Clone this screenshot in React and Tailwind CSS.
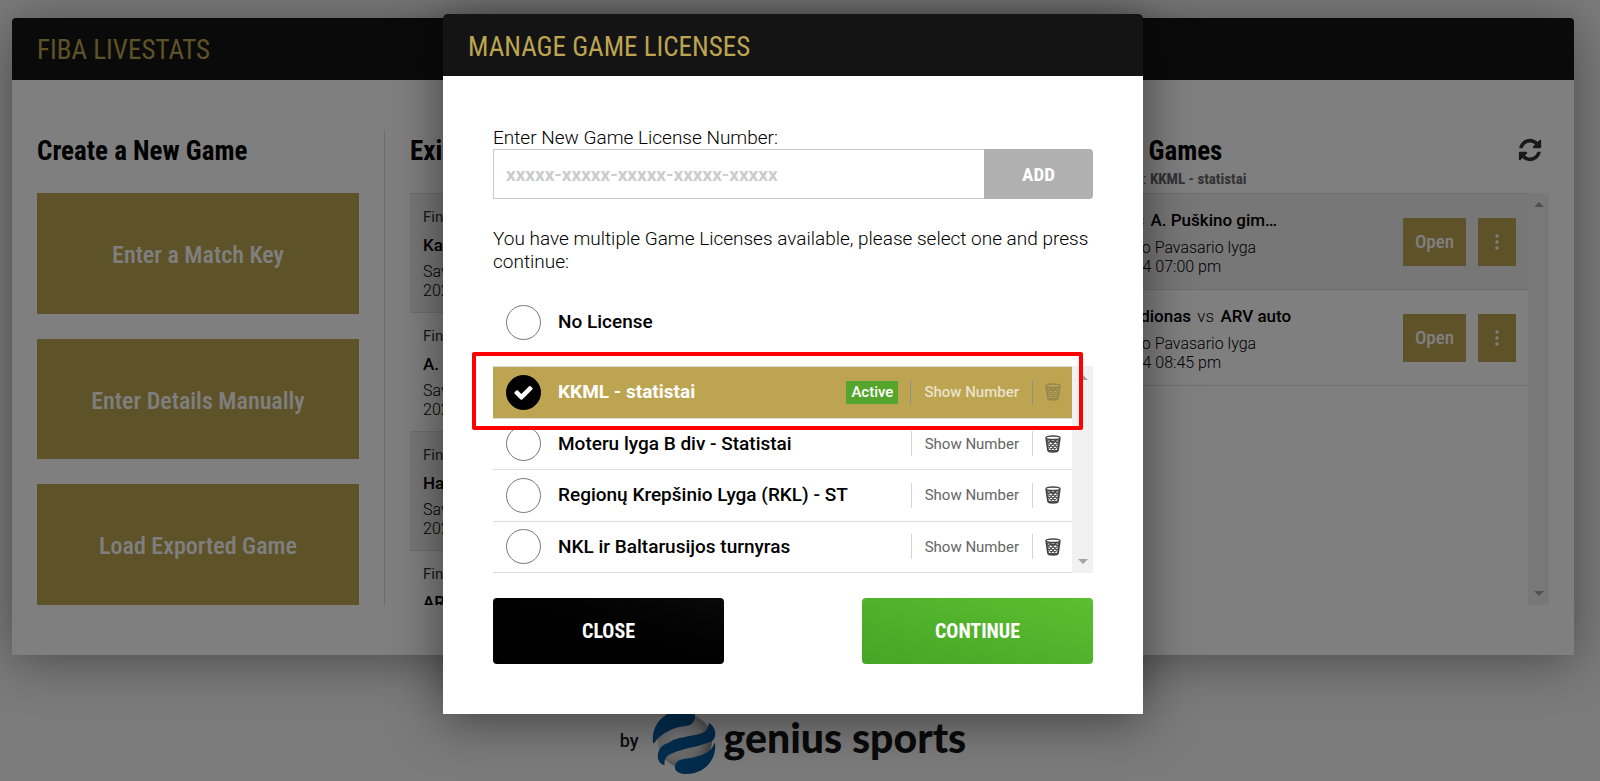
import { useState } from "react";

const licenses = [
  { id: "kkml", name: "KKML - statistai", active: true },
  { id: "moteru", name: "Moteru lyga B div - Statistai" },
  { id: "rkl", name: "Regionų Krepšinio Lyga (RKL) - ST" },
  { id: "nkl", name: "NKL ir Baltarusijos turnyras" },
];

const existingGames = [
  { status: "Final", name: "Kauno", saved: "Saved", date: "2024" },
  { status: "Final", name: "A. Puškino", saved: "Saved", date: "2024" },
  { status: "Final", name: "Handler", saved: "Saved", date: "2024" },
  { status: "Final", name: "ARV auto", saved: "Saved", date: "2024" },
];

const onlineGames = [
  { home: "KTU", away: "A. Puškino gim…", league: "Jaunimo Pavasario lyga", date: "2-5-2024 07:00 pm" },
  { home: "BC Stadionas", away: "ARV auto", league: "Jaunimo Pavasario lyga", date: "2-5-2024 08:45 pm" },
];

const CheckIcon = () => (
  <svg viewBox="0 0 1792 1792" className="pointer-events-none absolute inset-0 m-auto size-[21px] fill-white">
    <path d="M1671 566q0 40-28 68l-724 724-136 136q-28 28-68 28t-68-28l-136-136-362-362q-28-28-28-68t28-68l136-136q28-28 68-28t68 28l294 295 656-657q28-28 68-28t68 28l136 136q28 28 28 68z" />
  </svg>
);

const RefreshIcon = () => (
  <svg viewBox="0 0 1792 1792" className="size-[26px] fill-[#333]">
    <path d="M1639 1056q0 5-1 7-64 268-268 434.500t-478 166.500q-146 0-282.500-55t-243.500-157l-129 129q-19 19-45 19t-45-19-19-45v-448q0-26 19-45t45-19h448q26 0 45 19t19 45-19 45l-137 137q71 66 161 102t187 36q134 0 250-65t186-179q11-17 53-117 8-23 30-23h192q13 0 22.500 9.500t9.500 22.500zm25-800v448q0 26-19 45t-45 19h-448q-26 0-45-19t-19-45 19-45l138-138q-148-137-349-137-134 0-250 65t-186 179q-11 17-53 117-8 23-30 23h-199q-13 0-22.500-9.500t-9.500-22.500v-7q65-268 270-434.500t480-166.500q146 0 284 55.500t245 156.500l130-129q19-19 45-19t45 19 19 45z" />
  </svg>
);

const TrashIcon = () => (
  <svg viewBox="0 0 16 18" className="h-[18px] w-4" fill="none" stroke="#444">
    <ellipse cx="8" cy="2.800" rx="7" ry="1.800" strokeWidth="1.500" />
    <path d="M1.200 3.500 2.900 15.200Q3.200 17 8 17t5.100-1.800L14.800 3.500" strokeWidth="1.700" />
    <path d="M2 5.500Q8 7.500 14 5.500M3 15q5 1.800 10 0" strokeWidth="1.300" />
    <path d="M2 6.500 11.500 16M5 5.500l8 8M9.500 5.500l4.300 4.300M2.700 10.500 8.500 16.300M14 6.500 4.500 16M11 5.500l-8 8M6.500 5.500 2.200 9.800M13.300 10.500 7.500 16.300" strokeWidth="1.100" />
  </svg>
);

const GlobeLogo = () => (
  <svg viewBox="0 0 64 66" className="h-[66px] w-16">
    <defs>
      <radialGradient id="ball" cx="0.400" cy="0.450" r="0.650">
        <stop offset="0" stopColor="#f4f4f4" />
        <stop offset="0.600" stopColor="#cfcfcf" />
        <stop offset="1" stopColor="#7a7a7a" />
      </radialGradient>
      <linearGradient id="band" x1="0" y1="0" x2="1" y2="1">
        <stop offset="0" stopColor="#0a66ac" />
        <stop offset="1" stopColor="#004c8c" />
      </linearGradient>
    </defs>
    <circle cx="33" cy="32" r="27" fill="url(#ball)" />
    <path d="M1 34C-1 14 14 1 32 1c8 0 12 3 11 8-1 4-3 7-9 8-10 1-16 4-21 7C8 27 5 30 3 33q-1 2-2 1z" fill="url(#band)" />
    <path d="M57 14c5 3 7 8 6 13-1 4-3 6-8 7-8 3-15 4-22 6-11 3-19 6-20 11-1 2 0 5-1 5-4-1-7-5-6-11 1-6 4-9 10-11 6-4 11-5 17-6 8-2 14-2 19-5 4-2 4-6 5-9z" fill="url(#band)" />
    <path d="M63 34c2 16-10 31-29 31-8 0-12-4-11-8 1-5 4-6 9-7 7-1 12-2 18-4 7-3 10-6 12-11q1-2 1-1z" fill="url(#band)" />
  </svg>
);

const Scrollbar = () => (
  <div className="flex w-[21px] shrink-0 flex-col items-center justify-between bg-[#f1f1f1] py-[7px]">
    <svg viewBox="0 0 10 10" className="size-[10px] fill-[#a3a3a3]">
      <path d="M0 7 5 2l5 5z" />
    </svg>
    <svg viewBox="0 0 10 10" className="size-[10px] fill-[#a3a3a3]">
      <path d="M0 3h10L5 8z" />
    </svg>
  </div>
);

const LicenseRadio = ({ id, checked, onChange }) => (
  <span className="relative block size-[35px] shrink-0">
    <input
      type="radio"
      name="license"
      id={id}
      checked={checked}
      onChange={onChange}
      className="block size-full appearance-none rounded-full border border-[#777] bg-white checked:border-black checked:bg-black"
    />
    {checked && <CheckIcon />}
  </span>
);

const LicenseRow = ({ license, selected, onSelect }) => (
  <li
    className={`flex flex-1 items-center gap-3 border-b border-[#dcdcdc] pr-[11px] pl-[13px] ${
      selected ? "bg-[#bda451]" : "bg-white"
    }`}
  >
    <LicenseRadio id={license.id} checked={selected} onChange={onSelect} />
    <label
      htmlFor={license.id}
      className={`flex-1 pl-[5px] text-[19px] ${selected ? "font-bold text-white" : "font-medium text-black"}`}
    >
      {license.name}
    </label>
    {license.active && (
      <span className="bg-[#54a52c] px-[5px] text-[15px] leading-[23px] font-medium text-white">Active</span>
    )}
    <button
      type="button"
      className={`h-[25px] border-x px-[13px] text-[15px] ${
        selected ? "border-[#8f8f8f] font-medium text-white/70" : "border-[#d5d5d5] text-[#666]"
      }`}
    >
      Show Number
    </button>
    <button type="button" aria-label="Delete license" className={selected ? "opacity-30" : ""}>
      <TrashIcon />
    </button>
  </li>
);

const ManageLicenses = () => {
  const [selected, setSelected] = useState("kkml");
  const [number, setNumber] = useState("");

  return (
    <div role="dialog" aria-label="Manage Game Licenses" className="relative w-full max-w-[700px] self-start rounded-t bg-white shadow-[0_5px_50px_rgba(0,0,0,0.5)]">
      <header className="flex h-[62px] items-center rounded-t bg-[#141414] px-[25px] pt-1">
        <h2 className="font-['Roboto_Condensed','Liberation_Sans_Narrow',sans-serif] text-[27px] text-[#bda451] uppercase">
          Manage Game Licenses
        </h2>
      </header>

      <div className="p-[50px]">
        <label htmlFor="license-number" className="block text-[19px] leading-[23px] font-light">
          Enter New Game License Number:
        </label>
        <div className="flex h-[50px]">
          <input
            id="license-number"
            type="text"
            value={number}
            onChange={(e) => setNumber(e.target.value)}
            placeholder="xxxxx-xxxxx-xxxxx-xxxxx-xxxxx"
            className="min-w-0 flex-1 border border-r-0 border-[#c8c8c8] px-3 pt-[2px] text-[19px] font-bold placeholder:text-[#ccc]"
          />
          <button
            type="button"
            className="w-[109px] rounded-r bg-[#b0b0b0] pt-[2px] font-['Roboto_Condensed','Liberation_Sans_Narrow',sans-serif] text-[19px] font-bold text-white"
          >
            ADD
          </button>
        </div>

        <p className="mt-7 text-[19px] leading-[23px] font-light">
          You have multiple Game Licenses available, please select one and press continue:
        </p>

        <div className="mt-8 flex items-center gap-[17px] px-[13px]">
          <LicenseRadio id="none" checked={selected === "none"} onChange={() => setSelected("none")} />
          <label htmlFor="none" className="text-[19px] font-medium">
            No License
          </label>
        </div>

        <div className="relative mt-[26px] flex h-[207px]">
          <ul className="flex flex-1 flex-col border-t border-[#dcdcdc]">
            {licenses.map((license) => (
              <LicenseRow
                key={license.id}
                license={license}
                selected={selected === license.id}
                onSelect={() => setSelected(license.id)}
              />
            ))}
          </ul>
          <Scrollbar />
          <div className="pointer-events-none absolute -top-[14px] -left-[21px] h-[78px] w-[611px] rounded-xs border-4 border-[#fe0000]" />
        </div>

        <div className="mt-[25px] flex justify-between font-['Roboto_Condensed','Liberation_Sans_Narrow',sans-serif] text-[20px] font-bold text-white">
          <button type="button" className="h-[66px] w-[231px] rounded bg-linear-to-tr from-black to-[#0a0a0a]">
            CLOSE
          </button>
          <button type="button" className="h-[66px] w-[231px] rounded bg-linear-to-tr from-[#46a526] to-[#5bbf30]">
            CONTINUE
          </button>
        </div>
      </div>
    </div>
  );
};

const App = () => {
  return (
    <div className="relative min-h-screen overflow-hidden bg-[#f6f6f6] pt-[18px] pr-[26px] pl-3 font-[Roboto,sans-serif] text-black">
      <main className="rounded-t bg-white shadow-[0_5px_50px_rgba(0,0,0,0.4)]">
        <header className="flex h-[62px] items-center rounded-t bg-[#141414] px-[25px] pt-[3px]">
          <h1 className="font-['Roboto_Condensed','Liberation_Sans_Narrow',sans-serif] text-[27px] text-[#bda451]">
            FIBA LIVESTATS
          </h1>
        </header>

        <div className="flex h-[calc(100vh-206px)] gap-[25px] px-[25px] py-[50px]">
          <section className="flex w-[348px] shrink-0 flex-col border-r border-[#dcdcdc] pr-[25px] font-['Roboto_Condensed','Liberation_Sans_Narrow',sans-serif]">
            <h2 className="h-[63px] shrink-0 text-[27px] leading-[42px] font-bold">Create a New Game</h2>
            <div className="flex flex-1 flex-col gap-[25px] text-[24px] font-medium text-white">
              <button type="button" className="flex-1 bg-[#bda451] pt-[3px]">Enter a Match Key</button>
              <button type="button" className="flex-1 bg-[#bda451] pt-[3px]">Enter Details Manually</button>
              <button type="button" className="flex-1 bg-[#bda451] pt-[3px]">Load Exported Game</button>
            </div>
          </section>

          <section className="flex min-w-0 flex-1 flex-col">
            <h2 className="h-[63px] shrink-0 font-['Roboto_Condensed','Liberation_Sans_Narrow',sans-serif] text-[27px] leading-[42px] font-bold">
              Existing Games
            </h2>
            <ul className="min-h-0 flex-1 overflow-hidden border-t border-[#dcdcdc]">
              {existingGames.map((game) => (
                <li key={game.name} className="border-b border-[#dcdcdc] px-[13px] pt-3 pb-3 odd:bg-[#eee]">
                  <p className="mb-1 text-[15px] leading-[22px] text-[#333]">{game.status}</p>
                  <p className="mb-1 text-[17px] leading-[26px] font-medium">{game.name}</p>
                  <p className="text-[16px] leading-[19px] font-light">{game.saved}</p>
                  <p className="text-[16px] leading-[19px] font-light">{game.date}</p>
                </li>
              ))}
            </ul>
          </section>

          <section className="flex w-[476px] shrink-0 flex-col">
            <div className="flex h-[63px] shrink-0 justify-between pr-[6px] font-['Roboto_Condensed','Liberation_Sans_Narrow',sans-serif]">
              <div>
                <h2 className="text-[27px] leading-[42px] font-bold">Online Games</h2>
                <p className="text-[15px] leading-[14px] text-[#666]">
                  Our License: <strong className="font-bold">KKML - statistai</strong>
                </p>
              </div>
              <button type="button" aria-label="Refresh" className="h-10">
                <RefreshIcon />
              </button>
            </div>
            <div className="flex flex-1">
              <ul className="flex-1 border-t border-[#dcdcdc]">
                {onlineGames.map((game) => (
                  <li
                    key={game.away}
                    className="flex h-24 items-center gap-3 border-b border-[#dcdcdc] pr-3 pl-4 odd:bg-[#eee]"
                  >
                    <div className="flex-1">
                      <p className="mb-[6px] text-[17px] leading-6 font-medium">
                        {game.home} <span className="mx-[2px] font-light">vs</span> {game.away}
                      </p>
                      <p className="text-[16px] leading-[19px] font-light">{game.league}</p>
                      <p className="text-[16px] leading-[19px] font-light">{game.date}</p>
                    </div>
                    <button
                      type="button"
                      className="h-12 w-[63px] bg-[#bda451] pt-[2px] font-['Roboto_Condensed','Liberation_Sans_Narrow',sans-serif] text-[19px] font-medium text-white"
                    >
                      Open
                    </button>
                    <button type="button" aria-label="More options" className="flex h-12 w-[38px] items-center justify-center bg-[#bda451]">
                      <svg viewBox="0 0 4 16" className="h-4 w-1 fill-white">
                        <circle cx="2" cy="2" r="1.700" />
                        <circle cx="2" cy="8" r="1.700" />
                        <circle cx="2" cy="14" r="1.700" />
                      </svg>
                    </button>
                  </li>
                ))}
              </ul>
              <Scrollbar />
            </div>
          </section>
        </div>
      </main>

      <footer className="flex items-center justify-center gap-[13px] pt-[54px]">
        <span className="pb-1 text-[18px] font-medium text-[#1a1a2a]">by</span>
        <div className="flex items-center gap-2">
          <GlobeLogo />
          <span className="pb-2 font-[Lato,sans-serif] text-[41px] leading-10 font-black text-[#141414]">genius sports</span>
        </div>
      </footer>

      <div className="absolute inset-0 flex justify-center bg-black/50 pt-[14px] pr-[14px]">
        <ManageLicenses />
      </div>
    </div>
  );
};

export default App;
